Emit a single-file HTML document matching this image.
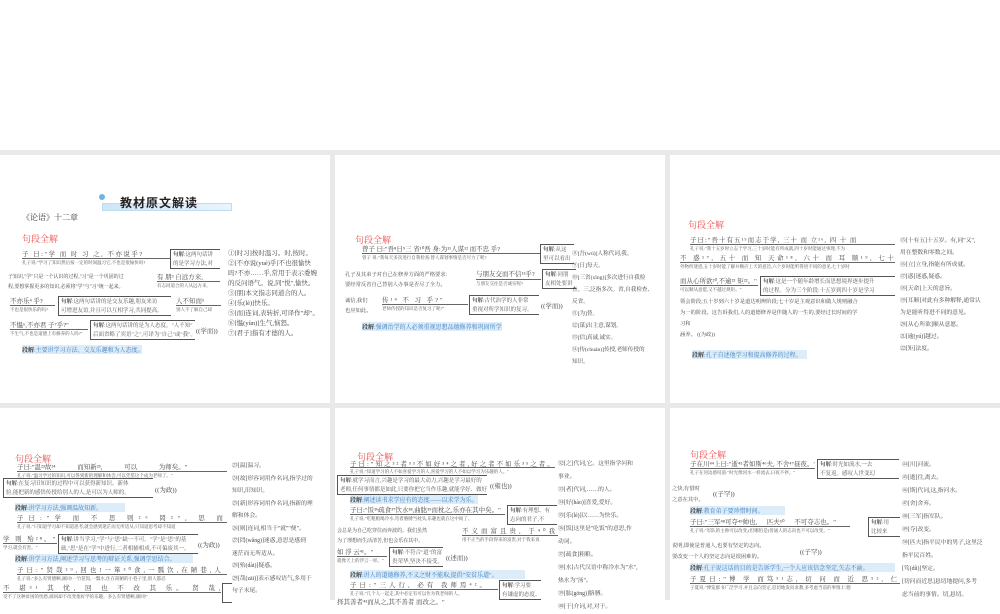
<!DOCTYPE html>
<html><head><meta charset="utf-8">
<style>
*{margin:0;padding:0;box-sizing:border-box}
body{width:1000px;height:600px;overflow:hidden;background:#fff;position:relative;font-family:"Liberation Serif","Noto Serif CJK SC","Noto Sans CJK SC",serif;color:#333}
.bg{position:absolute;left:0;top:150px;width:1000px;height:450px;background:#e9e9e9}
.s{position:absolute;background:#fff;overflow:hidden}
.a{position:absolute;white-space:nowrap;overflow:hidden}
.h{color:#e8524f;font-size:9px}
.t{font-size:6.5px;color:#444}
.g{font-size:4.5px;color:#555;border-top:0.6px solid #666;padding-top:1px}
.n{font-size:6.5px;color:#444}
.d{font-size:6px;color:#3a7bbf;background:#dcecf8}
.d b{color:#333}
.bx{position:absolute;border:0.7px solid #555;border-right:none;font-size:5.5px;color:#555;padding:1px 2px;line-height:9px;overflow:hidden;white-space:nowrap}
</style></head><body>
<div class="bg"></div>

<!-- slide 1 -->
<div class="s" style="left:0;top:155px;width:330px;height:248px"></div>
<div class="a" style="left:102px;top:203px;width:130px;height:8px;background:linear-gradient(90deg,#cfe6f8,#eaf4fc);border:0.5px solid #bcdcf2"></div>
<div class="a" style="left:99px;top:194px;width:6px;height:6px;border-radius:50%;background:#6fb4e6"></div>
<div class="a" style="left:120px;top:194px;font-size:12px;font-weight:bold;color:#222;font-family:'Noto Sans CJK SC',sans-serif;letter-spacing:1px">教材原文解读</div>
<div class="a" style="left:22px;top:212px;font-size:8px;color:#333">《论语》十二章</div>
<div class="a h" style="left:22px;top:232px">句段全解</div>
<div class="a t" style="left:22px;top:249px;width:148px;letter-spacing:1.5px">子 曰:"学 而 时 习 之, 不亦说乎?</div>
<div class="a g" style="left:22px;top:258px;width:148px">孔子说:"学习了知识然后按一定的时间温习它,不也是很愉快吗?</div>
<div class="bx" style="left:170px;top:249px;width:50px;height:20px"><b>句解</b>:这两句话讲<br>的是学习方法,对</div>
<div class="a t" style="left:8px;top:273px;width:150px;font-size:5px">子知识,"学"只是一个认识的过程,"习"是一个巩固的过</div>
<div class="a t" style="left:8px;top:283px;width:150px;font-size:5px">程,要想掌握更多的知识,必须将"学"与"习"统一起来。</div>
<div class="a t" style="left:157px;top:272px;width:63px">有 朋³ 自远方来,</div>
<div class="a g" style="left:157px;top:281px;width:63px">有志同道合的人从远方来,</div>
<div class="a t" style="left:10px;top:296px;width:45px">不亦乐⁴ 乎?</div>
<div class="a g" style="left:10px;top:305px;width:45px">不也是很快乐的吗?</div>
<div class="bx" style="left:58px;top:296px;width:113px;height:20px"><b>句解</b>:这两句话讲的是交友乐趣,朋友来访<br>可增进友谊,并且可以互相学习,共同提高。</div>
<div class="a t" style="left:176px;top:296px;width:45px">人不知而⁵</div>
<div class="a g" style="left:176px;top:305px;width:45px">别人不了解自己却</div>
<div class="a t" style="left:10px;top:320px;width:78px">不愠⁶,不亦君 子⁷乎?"</div>
<div class="a g" style="left:10px;top:329px;width:78px">不生气,不也是道德上有修养的人吗?"</div>
<div class="bx" style="left:90px;top:320px;width:105px;height:20px"><b>句解</b>:这两句话讲的是为人态度。"人不知"<br>后面省略了宾语"之",可译为"自己"或"我"。</div>
<div class="a t" style="left:196px;top:326px">((学而))</div>
<div class="a d" style="left:22px;top:345px;width:120px"><b>段解</b>:主要讲学习方法、交友乐趣和为人态度。</div>
<div class="a n" style="left:228px;top:249px;line-height:10px">①[时习]按时温习。时,按时。<br>②[不亦说(yuè)乎]不也很愉快<br>吗?不亦……乎,常用于表示委婉<br>的反问语气。说,同"悦",愉快。<br>③[朋]本文指志同道合的人。<br>④[乐(lè)]快乐。<br>⑤[而]连词,表转折,可译作"却"。<br>⑥[愠(yùn)]生气,恼怒。<br>⑦[君子]指有才德的人。</div>

<!-- slide 2 -->
<div class="s" style="left:335px;top:155px;width:330px;height:248px"></div>
<div class="a h" style="left:355px;top:233px">句段全解</div>
<div class="a t" style="left:362px;top:244px;width:178px">曾子 曰:"吾⁸日⁹三 省¹⁰吾 身:为¹¹人谋¹² 而不忠 乎?</div>
<div class="a g" style="left:362px;top:253px;width:178px">曾子 说:"我每天多次进行自我检查:替人谋划事情是否尽力了呢?</div>
<div class="bx" style="left:540px;top:244px;width:34px;height:20px"><b>句解</b>:从这<br>里可以看出</div>
<div class="a t" style="left:345px;top:270px;width:125px;font-size:5.3px">孔子及其弟子对自己在修养方面的严格要求:</div>
<div class="a t" style="left:345px;top:280px;width:125px;font-size:5.3px">要经常反省自己替别人办事是否尽了全力。</div>
<div class="a t" style="left:476px;top:269px;width:65px">与朋友交而不信¹³乎?</div>
<div class="a g" style="left:476px;top:279px;width:65px">与朋友交往是否诚实呢?</div>
<div class="bx" style="left:542px;top:269px;width:34px;height:20px"><b>句解</b>:同朋<br>友相处要讲</div>
<div class="a t" style="left:345px;top:296px;font-size:5.3px;line-height:10px">诚信,我们<br>也应如此。</div>
<div class="a t" style="left:382px;top:295px;width:86px;letter-spacing:2px">传¹⁴ 不 习 乎?"</div>
<div class="a g" style="left:382px;top:304px;width:86px">老师传授的知识是否复习了呢?"</div>
<div class="bx" style="left:469px;top:295px;width:70px;height:20px"><b>句解</b>:古代治学的人非常<br>重视对所学知识的复习。</div>
<div class="a t" style="left:541px;top:301px">((学而))</div>
<div class="a d" style="left:362px;top:322px;width:140px"><b>段解</b>:强调治学的人必须重视思想品德修养和巩固所学知识。</div>
<div class="a n" style="left:572px;top:248px;line-height:12px;font-size:5.6px">⑧[吾(wú)]人称代词,我。<br>⑨[日]每天。<br>⑩[三省(xǐng)]多次进行自我检<br>查。三,泛指多次。省,自我检查、<br>反省。<br>⑪[为]替。<br>⑫[谋]出主意,谋划。<br>⑬[信]真诚,诚实。<br>⑭[传(chuán)]传授,老师传授的<br>知识。</div>

<!-- slide 3 -->
<div class="s" style="left:670px;top:155px;width:330px;height:248px"></div>
<div class="a h" style="left:688px;top:218px">句段全解</div>
<div class="a t" style="left:690px;top:235px;width:205px;letter-spacing:1px">子曰:"吾十有五¹⁵而志于学, 三十 而 立¹⁶, 四 十 而</div>
<div class="a g" style="left:690px;top:244px;width:205px">孔子说:"我十五岁时立志于学习,三十岁时能有所成就,四十岁时能通达事理,不为</div>
<div class="a t" style="left:680px;top:253px;width:215px;letter-spacing:2.5px">不 惑¹⁷, 五十 而 知 天命¹⁸, 六十 而 耳 顺¹⁹, 七十</div>
<div class="a g" style="left:680px;top:262px;width:215px">外物所迷惑,五十岁时能了解并顺应上天的意旨,六十岁时能听得进不同的意见,七十岁时</div>
<div class="a t" style="left:680px;top:276px;width:78px">而从心所欲²⁰,不逾²¹ 矩²²。"</div>
<div class="a g" style="left:680px;top:285px;width:78px">可以顺从意愿,又不越过规矩。"</div>
<div class="bx" style="left:760px;top:276px;width:135px;height:20px"><b>句解</b>:这是一个随年龄增长而思想境界逐步提升<br>的过程。分为三个阶段:十五岁到四十岁是学习</div>
<div class="a t" style="left:680px;top:297px;width:215px;font-size:5.3px;line-height:11px">领会阶段;五十岁到六十岁是道达明辨阶段;七十岁是主观意识和做人规则融合<br>为一的阶段。这告诉我们,人的道德修养是伴随人的一生的,要经过长时间的学<br>习和<br>涵养。 ((为政))</div>
<div class="a d" style="left:692px;top:350px;width:115px"><b>段解</b>:孔子自述他学习和提高修养的过程。</div>
<div class="a n" style="left:900px;top:235px;line-height:12px;font-size:5.8px">⑮[十有五]十五岁。有,同"又",<br>用在整数和零数之间。<br>⑯[立]立身,指能有所成就。<br>⑰[惑]迷惑,疑惑。<br>⑱[天命]上天的意旨。<br>⑲[耳顺]对此有多种解释,通常认<br>为是能听得进不同的意见。<br>⑳[从心所欲]顺从意愿。<br>㉑[逾(yú)]越过。<br>㉒[矩]法度。</div>

<!-- row 2 slide 1 -->
<div class="s" style="left:0;top:408px;width:330px;height:192px"></div>
<div class="a h" style="left:15px;top:452px">句段全解</div>
<div class="a t" style="left:17px;top:462px;width:210px;word-spacing:20px">子曰:"温²³故²⁴ 而知新²⁵, 可以 为师矣。"</div>
<div class="a g" style="left:17px;top:471px;width:210px">孔子说:"温习学过的知识,可以得到新的理解和体会,可以凭借这个成为老师了。"</div>
<div class="bx" style="left:3px;top:478px;width:150px;height:20px"><b>句解</b>:在复习旧知识的过程中可以获得新知识、新体<br>验,能把新的感悟传授给别人的人,是可以为人师的。</div>
<div class="a t" style="left:155px;top:485px">((为政))</div>
<div class="a d" style="left:15px;top:503px;width:110px"><b>段解</b>:讲学习方法,强调温故知新。</div>
<div class="a t" style="left:17px;top:513px;width:210px;letter-spacing:5px">子曰:"学 而 不 思 则²⁶ 罔²⁷, 思 而 不</div>
<div class="a g" style="left:17px;top:522px;width:210px">孔子说:"只知道学习却不知道思考,就会感到迷茫而无所适从;只知道思考却不知道</div>
<div class="a t" style="left:3px;top:534px;width:54px;letter-spacing:2px">学 则 殆²⁸。"</div>
<div class="a g" style="left:3px;top:543px;width:54px">学习,就会有害。"</div>
<div class="bx" style="left:58px;top:534px;width:140px;height:20px"><b>句解</b>:讲当学习,"学"与"思"缺一不可。"学"是"思"的基<br>础,"思"是在"学"中进行,二者相辅相成,不可偏废其一。</div>
<div class="a t" style="left:198px;top:540px">((为政))</div>
<div class="a d" style="left:15px;top:554px;width:178px"><b>段解</b>:讲学习方法,阐述学习与思考的辩证关系,强调学思结合。</div>
<div class="a t" style="left:17px;top:565px;width:210px;letter-spacing:3px">子曰:"贤哉²⁹,回也!一箪³⁰食,一瓢饮,在陋巷,人</div>
<div class="a g" style="left:17px;top:574px;width:210px">孔子说:"多么有贤德啊,颜回!一竹筐饭,一瓢水,住在简陋的小巷子里,别人都忍</div>
<div class="a t" style="left:3px;top:583px;width:218px;letter-spacing:4px">不 堪³¹ 其 忧, 回 也 不 改 其 乐。 贤 哉,回也!"</div>
<div class="a g" style="left:3px;top:592px;width:218px">受不了这种贫困的忧愁,颜回却不改变他好学的乐趣。多么有贤德啊,颜回!"</div>
<div class="bx" style="left:222px;top:583px;width:10px;height:20px"></div>
<div class="a n" style="left:232px;top:460px;line-height:12.5px;font-size:5.8px">㉓[温]温习。<br>㉔[故]形容词用作名词,指学过的<br>知识,旧知识。<br>㉕[新]形容词用作名词,指新的理<br>解和体会。<br>㉖[则]连词,相当于"就""便"。<br>㉗[罔(wǎng)]迷惑,意思是感到<br>迷茫而无所适从。<br>㉘[殆(dài)]疑惑。<br>㉙[哉(zāi)]表示感叹语气,多用于<br>句子末尾。</div>

<!-- row 2 slide 2 -->
<div class="s" style="left:335px;top:408px;width:330px;height:192px"></div>
<div class="a h" style="left:357px;top:450px">句段全解</div>
<div class="a t" style="left:350px;top:459px;width:205px;letter-spacing:2px">子曰:"知之³²者³³不如好³⁴之者,好之者不如乐³⁵之者。"</div>
<div class="a g" style="left:350px;top:467px;width:205px">孔子说:"知道学习的人不如喜爱学习的人,喜爱学习的人不如以学习为乐趣的人。"</div>
<div class="bx" style="left:337px;top:475px;width:150px;height:20px"><b>句解</b>:就学习而言,兴趣是学习的最大动力,兴趣是学习最好的<br>老师,任何事情都是如此,只要你把它当作乐趣,就能学好、做好。</div>
<div class="a t" style="left:490px;top:481px">((雍也))</div>
<div class="a d" style="left:350px;top:495px;width:128px"><b>段解</b>:阐述读书求学应有的态度——以求学为乐。</div>
<div class="a t" style="left:350px;top:505px;width:155px">子曰:"饭³⁶疏食³⁷饮水³⁸,曲肱³⁹而枕之,乐亦在其中矣。"</div>
<div class="a g" style="left:350px;top:514px;width:155px">孔子说:"吃粗粮喝冷水,弯着胳膊当枕头,乐趣也就在这中间了。</div>
<div class="bx" style="left:507px;top:505px;width:50px;height:20px"><b>句解</b>:有理想、有<br>志向的君子,不</div>
<div class="a t" style="left:337px;top:527px;width:120px;font-size:5px;line-height:10px">会总是为自己吃穿住而奔波的。我们虽然<br>为了理想而生活清苦,但也会乐在其中。</div>
<div class="a t" style="left:462px;top:526px;width:96px;letter-spacing:3px">不义而富且贵, 于⁴⁰我</div>
<div class="a g" style="left:462px;top:535px;width:96px">用不正当的手段得来的富贵,对于我来说</div>
<div class="a t" style="left:337px;top:547px;width:50px">如 浮 云⁴¹。"</div>
<div class="a g" style="left:337px;top:556px;width:50px">就像天上的浮云一样。"</div>
<div class="bx" style="left:389px;top:547px;width:54px;height:20px"><b>句解</b>:不符合"道"的富<br>贵荣华,坚决不接受。</div>
<div class="a t" style="left:446px;top:553px">((述而))</div>
<div class="a d" style="left:350px;top:570px;width:175px"><b>段解</b>:讲人的道德修养,不义之财不能取,提倡"安贫乐道"。</div>
<div class="a t" style="left:350px;top:580px;width:148px;letter-spacing:3px">子曰:"三人行, 必有 我师焉⁴²。</div>
<div class="a g" style="left:350px;top:589px;width:148px">孔子说:"几个人一起走,其中必定有可以作为我老师的人。</div>
<div class="bx" style="left:499px;top:580px;width:42px;height:20px"><b>句解</b>:学习要<br>有谦虚的态度。</div>
<div class="a t" style="left:337px;top:597px;width:200px">择其善者⁴³而从之,其不善者 而改之。"</div>
<div class="a n" style="left:558px;top:458px;line-height:13px;font-size:5.8px">㉜[之]代词,它。这里指学问和<br>事业。<br>㉝[者]代词,……的人。<br>㉞[好(hào)]喜爱,爱好。<br>㉟[乐(lè)]以……为快乐。<br>㊱[饭]这里是"吃饭"的意思,作<br>动词。<br>㊲[疏食]粗粮。<br>㊳[水]古代汉语中称冷水为"水",<br>热水为"汤"。<br>㊴[肱(gōng)]胳膊。<br>㊵[于]介词,对,对于。</div>

<!-- row 2 slide 3 -->
<div class="s" style="left:670px;top:408px;width:330px;height:192px"></div>
<div class="a h" style="left:690px;top:448px">句段全解</div>
<div class="a t" style="left:690px;top:459px;width:125px">子在川⁴⁴上曰:"逝⁴⁵者如斯⁴⁶夫, 不舍⁴⁷昼夜。"</div>
<div class="a g" style="left:690px;top:468px;width:125px">孔子在河边感叹道:"时光像河水一样流去,日夜不停。"</div>
<div class="bx" style="left:817px;top:459px;width:82px;height:20px"><b>句解</b>:时光如流水,一去<br>不复返。感叹人世变幻</div>
<div class="a t" style="left:672px;top:484px;font-size:5.3px;line-height:11px">之快,有惜时<br>之意在其中。</div>
<div class="a t" style="left:713px;top:489px">((子罕))</div>
<div class="a d" style="left:690px;top:506px;width:95px"><b>段解</b>:教育弟子要珍惜时间。</div>
<div class="a t" style="left:690px;top:517px;width:160px;word-spacing:8px">子曰:"三军⁴⁸可夺⁴⁹帅也, 匹夫⁵⁰ 不可夺志也。"</div>
<div class="a g" style="left:690px;top:526px;width:160px">孔子说:"军队的主帅可以改变,(但哪怕是)普通人的志向也不可以改变。"</div>
<div class="bx" style="left:868px;top:517px;width:32px;height:20px"><b>句解</b>:用<br>比较来</div>
<div class="a t" style="left:672px;top:541px;width:125px;font-size:5.3px;line-height:11px">说明,即使是普通人,也要有坚定的志向。<br>要改变一个人的坚定志向是很困难的。</div>
<div class="a t" style="left:800px;top:547px">((子罕))</div>
<div class="a d" style="left:690px;top:563px;width:205px"><b>段解</b>:孔子说这话的目的是告诉学生,一个人应该信念坚定,矢志不渝。</div>
<div class="a t" style="left:690px;top:574px;width:210px;letter-spacing:3px">子夏曰:"博 学 而笃⁵¹志, 切 问 而 近 思⁵², 仁⁵³</div>
<div class="a g" style="left:690px;top:583px;width:210px">子夏说:"博览群书广泛学习,并且志向坚定,恳切地发问求教,多考虑当前的事情,仁德</div>
<div class="a n" style="left:902px;top:459px;line-height:13px;font-size:5.8px">㊹[川]河流。<br>㊺[逝]往,离去。<br>㊻[斯]代词,这,指河水。<br>㊼[舍]舍弃。<br>㊽[三军]指军队。<br>㊾[夺]改变。<br>㊿[匹夫]指平民中的男子,这里泛<br>指平民百姓。<br>[笃(dǔ)]坚定。<br>[切问而近思]恳切地提问,多考<br>虑当前的事情。切,恳切。</div>
</body></html>
